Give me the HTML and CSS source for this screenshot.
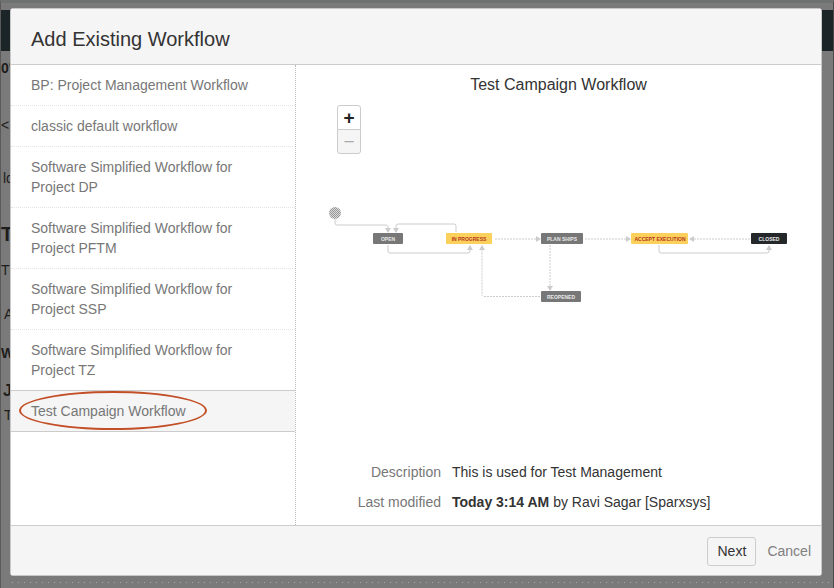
FILE: index.html
```html
<!DOCTYPE html>
<html lang="en">
<head>
    <meta charset="UTF-8">
    <title>Add Existing Workflow</title>
    <link rel="stylesheet" href="styles.css">
</head>
<body>
    <div class="backdrop">
        <div class="topbar"></div>
        <div class="bg-text">
            <p class="bg-a">0'</p>
            <p class="bg-b">&lt;</p>
            <p class="bg-c">ld</p>
            <p class="bg-d">Tc</p>
            <p class="bg-e">Th</p>
            <p class="bg-f">A</p>
            <p class="bg-g">W</p>
            <p class="bg-h">J</p>
            <p class="bg-i">T</p>
        </div>
    </div>

    <div class="dialog">
        <div class="dialog-header">
            <h2>Add Existing Workflow</h2>
        </div>

        <div class="dialog-body">
            <ul class="workflow-list">
                <li>BP: Project Management Workflow</li>
                <li>classic default workflow</li>
                <li>Software Simplified Workflow for Project DP</li>
                <li>Software Simplified Workflow for Project PFTM</li>
                <li>Software Simplified Workflow for Project SSP</li>
                <li>Software Simplified Workflow for Project TZ</li>
                <li class="selected">Test Campaign Workflow<span class="circled"></span></li>
            </ul>

            <div class="preview">
                <h3>Test Campaign Workflow</h3>

                <div class="diagram">
                    <div class="zoom-buttons">
                        <button type="button" class="zoom-in">+</button>
                        <button type="button" class="zoom-out">&minus;</button>
                    </div>
                    <svg class="graph" width="526" height="335" viewBox="296 105 526 335">
                        <defs>
                            <marker id="tip" markerWidth="6" markerHeight="6" refX="4" refY="3" orient="auto">
                                <path d="M0 0 L5 3 L0 6 Z" fill="#ccc"/>
                            </marker>
                            <pattern id="stipple" width="2" height="2" patternUnits="userSpaceOnUse">
                                <rect width="2" height="2" fill="#d8d8d8"/>
                                <rect width="1" height="1" fill="#999"/>
                                <rect x="1" y="1" width="1" height="1" fill="#999"/>
                            </pattern>
                        </defs>
                        <circle class="start" cx="335" cy="213" r="6"/>
                        <path class="edge" marker-end="url(#tip)" d="M335 219 V223 Q335 225 337 225 H386 Q388 225 388 227 V232"/>
                        <path class="edge" marker-end="url(#tip)" d="M456 232 V226 Q456 224 454 224 H398 Q396 224 396 226 V232"/>
                        <path class="edge" marker-end="url(#tip)" d="M388 245 V251 Q388 253 390 253 H468 Q470 253 470 251 V246"/>
                        <path class="edge dots" marker-end="url(#tip)" d="M495 239 H540"/>
                        <path class="edge dots" marker-end="url(#tip)" d="M585 239 H630"/>
                        <path class="edge dots" marker-end="url(#tip)" d="M750 239 H690"/>
                        <path class="edge dots" marker-end="url(#tip)" d="M550 245 V290"/>
                        <path class="edge dots" marker-end="url(#tip)" d="M540 296.500 H484 Q482 296.500 482 294 V246"/>
                        <path class="edge" marker-end="url(#tip)" d="M659 245 V251 Q659 253 661 253 H767 Q769 253 769 251 V246"/>

                        <rect class="node grey" x="373" y="233" width="30" height="11" rx="1"/>
                        <text class="label" x="388" y="240.500">OPEN</text>
                        <rect class="node yellow" x="446" y="233" width="46" height="11" rx="1"/>
                        <text class="label on-yellow" x="469" y="240.500">IN PROGRESS</text>
                        <rect class="node grey" x="541" y="233" width="42" height="11" rx="1"/>
                        <text class="label" x="562" y="240.500">PLAN SHIPS</text>
                        <rect class="node yellow" x="631" y="233" width="57" height="11" rx="1"/>
                        <text class="label on-yellow" x="660" y="240.500">ACCEPT EXECUTION</text>
                        <rect class="node dark" x="751" y="233" width="36" height="11" rx="1"/>
                        <text class="label" x="769" y="240.500">CLOSED</text>
                        <rect class="node grey" x="541" y="291" width="40" height="11" rx="1"/>
                        <text class="label" x="561" y="298.500">REOPENED</text>
                    </svg>
                </div>

                <dl class="details">
                    <div class="detail-row">
                        <dt>Description</dt>
                        <dd>This is used for Test Management</dd>
                    </div>
                    <div class="detail-row">
                        <dt>Last modified</dt>
                        <dd><strong>Today 3:14 AM</strong> by Ravi Sagar [Sparxsys]</dd>
                    </div>
                </dl>
            </div>
        </div>

        <div class="dialog-footer">
            <button type="button" class="next">Next</button>
            <a href="#" class="cancel">Cancel</a>
        </div>
    </div>
</body>
</html>
```

FILE: styles.css
```css
* {
    box-sizing: border-box;
}
html, body {
    margin: 0;
    height: 100%;
}
body {
    position: relative;
    width: 834px;
    height: 588px;
    overflow: hidden;
    background-color: #7a7a7a;
    font-family: "Liberation Sans", Arial, sans-serif;
    font-size: 14px;
    color: #333;
}
.backdrop {
    height: 100%;
    border-top: 3px solid #6f7070;
    border-left: 1px solid #5a5a5a;
    border-right: 1px solid #4a4a4a;
}
/* row of light specks under the dialog */
.backdrop::after {
    content: "";
    position: absolute;
    left: 12px;
    right: 0;
    bottom: 5px;
    height: 1px;
    background: repeating-linear-gradient(to right, #a8a8a8 0, #a8a8a8 1px, transparent 1px, transparent 6px);
}
.topbar {
    margin-top: 7px;
    height: 41px;
    background-color: #1b2426;
}
.bg-text {
    color: #1d1d1d;
}
.bg-text p {
    margin: 0;
    white-space: nowrap;
}
.bg-a { padding-top: 9px; height: 30px; font-weight: bold; }
.bg-b { padding-top: 36px; height: 68px; }
.bg-c { padding-top: 21px; height: 52px; margin-left: 2px !important; }
.bg-d { padding-top: 22px; height: 56px; font-size: 20px; font-weight: bold; }
.bg-e { padding-top: 5px; height: 26px; }
.bg-f { padding-top: 23px; height: 49px; margin-left: 3px !important; }
.bg-g { padding-top: 13px; height: 35px; font-weight: bold; }
.bg-h { padding-top: 15px; height: 41px; font-size: 16px; font-weight: bold; margin-left: 2px !important; }
.bg-i { height: 22px; margin-top: -1px !important; margin-left: 3px !important; }

.dialog {
    position: absolute;
    left: 10px;
    top: 8px;
    width: 812px;
    height: 568px;
    display: flex;
    flex-direction: column;
    background-color: #fff;
    border: 1px solid #c8c8c8;
    border-radius: 3px;
}
.dialog-header {
    height: 56px;
    padding: 16px 20px 0;
    background-color: #f5f5f5;
    border-bottom: 1px solid #ccc;
}
.dialog-header h2 {
    margin: 0;
    font-size: 20px;
    font-weight: normal;
    line-height: 28px;
}
.dialog-body {
    flex: 1;
    display: flex;
    min-height: 0;
}
.workflow-list {
    width: 285px;
    margin: 0;
    padding: 0;
    list-style-type: none;
    border-right: 1px dotted #bbb;
}
.workflow-list li {
    position: relative;
    padding: 10px 20px;
    line-height: 20px;
    color: #777;
    border-bottom: 1px dotted #e4e4e4;
}
.workflow-list li.selected {
    margin-top: -1px;
    background-color: #f5f5f5;
    border-top: 1px solid #ccc;
    border-bottom: 1px solid #ccc;
}
.circled {
    position: absolute;
    left: 8px;
    top: 0;
    width: 188px;
    height: 39px;
    border: 2px solid #c24f27;
    border-radius: 50%;
}
.preview {
    flex: 1;
    display: flex;
    flex-direction: column;
    min-width: 0;
}
.preview h3 {
    margin: 0;
    padding-top: 10px;
    font-size: 16px;
    font-weight: normal;
    line-height: 20px;
    text-align: center;
}
.diagram {
    position: relative;
    flex: 1;
    min-height: 0;
}
.graph {
    display: block;
    margin-top: 10px;
}
.zoom-buttons {
    position: absolute;
    left: 41px;
    top: 10px;
    width: 24px;
    display: flex;
    flex-direction: column;
}
.zoom-buttons button {
    width: 24px;
    height: 25px;
    padding: 0;
    background-color: #fff;
    border: 1px solid #ccc;
    font-family: "Liberation Sans", Arial, sans-serif;
    font-size: 19px;
    font-weight: bold;
    line-height: 20px;
    color: #222;
}
.zoom-in {
    border-radius: 3px 3px 0 0;
}
.zoom-buttons .zoom-out {
    margin-top: -1px;
    border-radius: 0 0 3px 3px;
    background-color: #f5f5f5;
    font-weight: normal;
    color: #aaa;
}
.start {
    fill: url(#stipple);
}
.edge {
    fill: none;
    stroke: #ccc;
    stroke-width: 1;
}
.dots {
    stroke-dasharray: 2 1;
}
.grey { fill: #777; }
.yellow { fill: #fbd15c; }
.dark { fill: #24282a; }
.label {
    font-size: 5px;
    font-weight: bold;
    text-anchor: middle;
    fill: #e8e8e8;
}
.on-yellow {
    fill: #b5341c;
}
.details {
    margin: 0;
    padding-bottom: 3px;
}
.detail-row {
    display: flex;
    gap: 11px;
    height: 30px;
    line-height: 20px;
}
.detail-row dt {
    width: 145px;
    text-align: right;
    color: #777;
}
.detail-row dd {
    margin: 0;
}
.dialog-footer {
    height: 50px;
    display: flex;
    align-items: center;
    justify-content: flex-end;
    gap: 11px;
    padding: 1px 10px 0 0;
    background-color: #f5f5f5;
    border-top: 1px solid #ccc;
}
.next {
    width: 49px;
    height: 29px;
    padding: 0;
    background-color: #f5f5f5;
    border: 1px solid #ccc;
    border-radius: 3px;
    font-family: "Liberation Sans", Arial, sans-serif;
    font-size: 14px;
    color: #333;
}
.cancel {
    color: #808080;
    text-decoration: none;
}
```
